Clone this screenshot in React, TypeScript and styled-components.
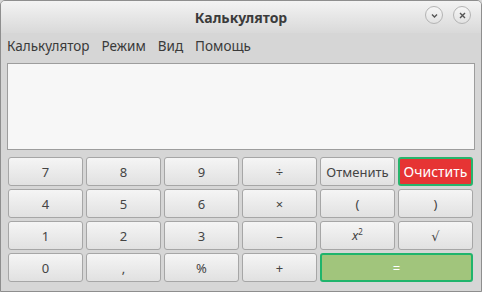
import React from "react";
import styled, { createGlobalStyle } from "styled-components";

const GlobalStyle = createGlobalStyle`
  html, body { margin: 0; padding: 0; background: #d6d6d6; }
  body { font-family: "Noto Sans", "DejaVu Sans", sans-serif; }
`;

const Window = styled.div`
  width: 482px;
  height: 292px;
  box-sizing: border-box;
  border: 1px solid #8e8e8e;
  border-radius: 5px 5px 0 0;
  background: #d6d6d6;
  display: flex;
  flex-direction: column;
  overflow: hidden;
`;

const TitleBar = styled.div`
  height: 32px;
  display: flex;
  align-items: center;
  justify-content: center;
  position: relative;
  background: linear-gradient(#f3f3f3, #d9d9d9);
`;

const Title = styled.div`
  font-size: 14px;
  font-weight: bold;
  color: #3b3b3b;
`;

const Controls = styled.div`
  position: absolute;
  right: 10px;
  top: 5px;
  display: flex;
  gap: 10px;
`;

const CtrlButton = styled.div`
  width: 18px;
  height: 18px;
  box-sizing: border-box;
  border-radius: 50%;
  border: 1px solid #b4b4b4;
  background: linear-gradient(#f6f6f6, #e2e2e2);
  display: flex;
  align-items: center;
  justify-content: center;
`;

const MenuBar = styled.div`
  height: 26px;
  display: flex;
  align-items: center;
  gap: 12px;
  padding: 0 6px;
  font-size: 13.5px;
  color: #3a3a3a;
`;

const Body = styled.div`
  flex: 1;
  display: flex;
  flex-direction: column;
  padding: 4px 6px 0 6px;
  gap: 7px;
`;

const Display = styled.div`
  height: 87px;
  box-sizing: border-box;
  border: 1px solid #9d9d9d;
  background: #f7f7f7;
`;

const Grid = styled.div`
  display: grid;
  grid-template-columns: repeat(6, 75px);
  grid-auto-rows: 29px;
  gap: 3px;
  padding-left: 1px;
`;

const Key = styled.button<{ $variant?: "clear" | "equals"; $span?: number }>`
  grid-column: span ${(p) => p.$span ?? 1};
  margin: 0;
  padding: 0;
  box-sizing: border-box;
  border-radius: 3px;
  font-family: "Noto Sans", "DejaVu Sans", sans-serif;
  font-size: 13px;
  display: flex;
  align-items: center;
  justify-content: center;
  ${(p) =>
    p.$variant === "clear"
      ? `background: #e63434; color: #fff; border: 2px solid #28b46c; font-size: 14px;`
      : p.$variant === "equals"
      ? `background: #a1c57c; color: #fff; border: 2px solid #1fb46c;`
      : `background: linear-gradient(#f5f5f5, #e1e1e1); color: #444; border: 1px solid #a6a6a6;`}
`;

const Sup = styled.span`
  font-style: italic;
  sup { font-size: 8px; font-style: normal; }
`;

const keys: { label: React.ReactNode; variant?: "clear" | "equals"; span?: number }[] = [
  { label: "7" }, { label: "8" }, { label: "9" }, { label: "÷" }, { label: "Отменить" }, { label: "Очистить", variant: "clear" },
  { label: "4" }, { label: "5" }, { label: "6" }, { label: "×" }, { label: "(" }, { label: ")" },
  { label: "1" }, { label: "2" }, { label: "3" }, { label: "–" }, { label: <Sup>x<sup>2</sup></Sup> }, { label: "√" },
  { label: "0" }, { label: "," }, { label: "%" }, { label: "+" }, { label: "=", variant: "equals", span: 2 },
];

export default function App() {
  return (
    <>
      <GlobalStyle />
      <Window>
        <TitleBar>
          <Title>Калькулятор</Title>
          <Controls>
            <CtrlButton>
              <svg width="9" height="9" viewBox="0 0 9 9">
                <path d="M2 3.5 L4.5 6 L7 3.5" stroke="#555" strokeWidth="1.4" fill="none" />
              </svg>
            </CtrlButton>
            <CtrlButton>
              <svg width="9" height="9" viewBox="0 0 9 9">
                <path d="M2 2 L7 7 M7 2 L2 7" stroke="#555" strokeWidth="1.4" fill="none" />
              </svg>
            </CtrlButton>
          </Controls>
        </TitleBar>
        <MenuBar>
          <span>Калькулятор</span>
          <span>Режим</span>
          <span>Вид</span>
          <span>Помощь</span>
        </MenuBar>
        <Body>
          <Display />
          <Grid>
            {keys.map((k, i) => (
              <Key key={i} $variant={k.variant} $span={k.span}>
                {k.label}
              </Key>
            ))}
          </Grid>
        </Body>
      </Window>
    </>
  );
}
